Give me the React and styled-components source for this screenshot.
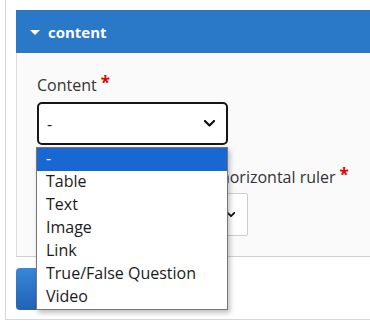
import React from "react";
import styled, { createGlobalStyle } from "styled-components";

const GlobalStyle = createGlobalStyle`
  html, body {
    margin: 0;
    padding: 0;
    background: #fff;
    overflow: hidden;
    font-family: "Open Sans", "Noto Sans", sans-serif;
  }
`;

const Frame = styled.div`
  margin-left: 5px;
  width: 400px;
  padding: 10px 0 9px 10px;
  border-left: 1px solid #d6d6d6;
  border-bottom: 1px solid #d6d6d6;
`;

const Header = styled.div`
  display: flex;
  align-items: center;
  gap: 8px;
  height: 43px;
  padding-left: 14px;
  background: #2a78c8;
  color: #fff;
  font-size: 15px;
  font-weight: 700;
`;

const Caret = styled.span`
  width: 0;
  height: 0;
  margin-top: 2px;
  border-left: 5px solid transparent;
  border-right: 5px solid transparent;
  border-top: 5px solid #fff;
`;

const Panel = styled.div`
  padding: 20px;
  background: #fafafa;
  border-left: 1px solid #dcdcdc;
  border-bottom: 1px solid #cfcfcf;
`;

const Field = styled.div`
  position: relative;
  & + & {
    margin-top: 20px;
  }
`;

const Label = styled.div`
  font-size: 16px;
  line-height: 24px;
  color: #333;
  margin-bottom: ${({ $gap }) => $gap}px;
`;

const Required = styled.span`
  margin-left: 4px;
  color: #e00000;
  font-weight: 700;
  font-size: 17px;
  line-height: 0;
  position: relative;
  top: -2px;
`;

const Select = styled.div`
  box-sizing: border-box;
  display: flex;
  align-items: center;
  justify-content: space-between;
  width: ${({ $width }) => $width}px;
  height: 43px;
  padding: 0 ${({ $focused }) => ($focused ? 11 : 12)}px 0 8px;
  background: #fff;
  border: ${({ $focused }) => ($focused ? "2px solid #161616" : "1px solid #cdcdcd")};
  border-radius: ${({ $focused }) => ($focused ? 5 : 2)}px;
  font-size: 16px;
  color: #222;
`;

const Options = styled.ul`
  position: absolute;
  left: -1px;
  top: 74px;
  box-sizing: border-box;
  width: 192px;
  margin: 0;
  padding: 0;
  list-style: none;
  background: #fff;
  border: 1px solid #767676;
  box-shadow: 2px 3px 5px rgba(0, 0, 0, 0.25);
  z-index: 2;
`;

const Option = styled.li`
  height: 23px;
  padding-left: 9px;
  font-size: 16px;
  line-height: 20px;
  color: ${({ $active }) => ($active ? "#fff" : "#1a1a1a")};
  background: ${({ $active }) => ($active ? "#1967d2" : "transparent")};
`;

const AddButton = styled.button`
  margin-top: 11px;
  width: 151px;
  height: 42px;
  border: 0;
  border-radius: 4px;
  background: linear-gradient(#3887d8, #2262b4);
  color: #fff;
  font-family: inherit;
  font-size: 15px;
  font-weight: 600;
`;

const Chevron = ({ size = 11, stroke = 2 }) => (
  <svg width={size} height={size / 2 + 1} viewBox="0 0 12 7" fill="none">
    <path d="M1 1l5 5 5-5" stroke="#111" strokeWidth={stroke * (12 / size)} strokeLinecap="round" strokeLinejoin="round" />
  </svg>
);

const options = ["-", "Table", "Text", "Image", "Link", "True/False Question", "Video"];

export default function App() {
  return (
    <>
      <GlobalStyle />
      <Frame>
        <Header>
          <Caret />
          content
        </Header>
        <Panel>
          <Field>
            <Label $gap={5}>
              Content<Required>*</Required>
            </Label>
            <Select $width={191} $focused>
              <span>-</span>
              <Chevron size={11} stroke={2.2} />
            </Select>
            <Options>
              {options.map((o, i) => (
                <Option key={o} $active={i === 0}>
                  {o}
                </Option>
              ))}
            </Options>
          </Field>
          <Field>
            <Label $gap={4}>
              Separate each item by a horizontal ruler<Required>*</Required>
            </Label>
            <Select $width={211}>
              <span>-</span>
              <Chevron size={8} stroke={1.8} />
            </Select>
          </Field>
        </Panel>
        <AddButton>Add content</AddButton>
      </Frame>
    </>
  );
}
